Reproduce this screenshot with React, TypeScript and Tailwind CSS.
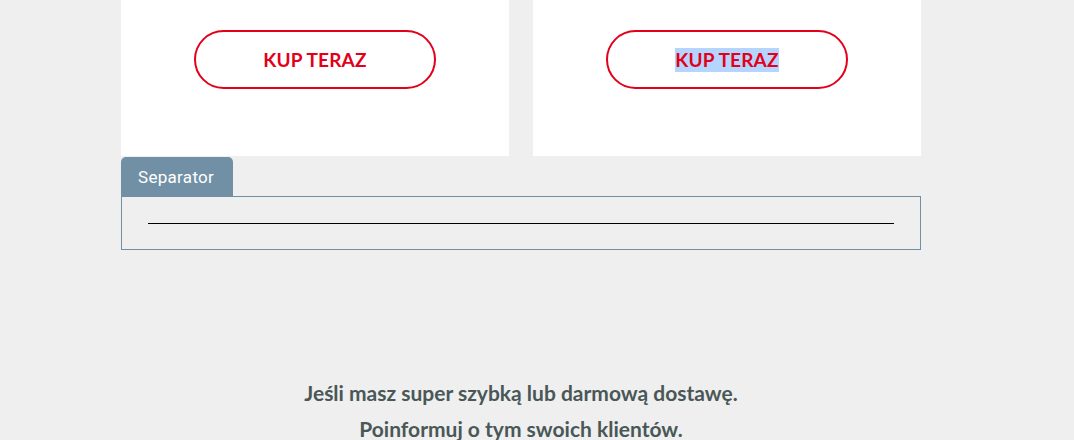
function BuyCard({ selected }: { selected?: boolean }) {
  return (
    <div className="flex h-[156px] justify-center bg-white pt-[30px]">
      <button className="flex h-[59px] w-[242px] items-center justify-center rounded-full border-2 border-[#e2001a] bg-white font-['Lato'] text-[19px] font-bold tracking-[0.2px] text-[#e2001a]">
        <span className={selected ? "bg-[#b4d5fe] leading-[24px]" : "leading-[24px]"}>KUP TERAZ</span>
      </button>
    </div>
  );
}

export default function App() {
  return (
    <div className="min-h-[440px] w-full overflow-hidden bg-[#efefef]">
      <div className="mx-auto w-[800px] -translate-x-[16px]">
        {/* Cards */}
        <div className="grid grid-cols-2 gap-6">
          <BuyCard />
          <BuyCard selected />
        </div>

        {/* Separator block */}
        <div className="mt-px">
          <div className="flex h-[39px] w-[112px] items-center rounded-t-[5px] bg-[#7190a5] pl-[17px] pt-[3px] font-['Roboto'] text-[17px] tracking-[0.3px] text-white">
            Separator
          </div>
          <div className="flex h-[54px] items-center border border-[#7190a5] px-[26px]">
            <div className="h-px w-full bg-black" />
          </div>
        </div>

        {/* Info text */}
        <div className="mt-[125px] text-center font-['Lato'] text-[21px] font-bold leading-[36px] text-[#4a5757]">
          <p>Jeśli masz super szybką lub darmową dostawę.</p>
          <p>Poinformuj o tym swoich klientów.</p>
        </div>
      </div>
    </div>
  );
}
